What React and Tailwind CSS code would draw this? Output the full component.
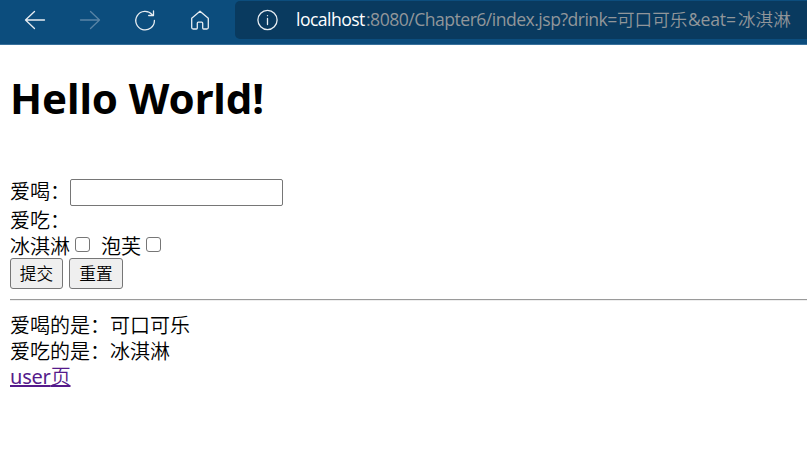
function Stroke({ children, className }) {
  return (
    <svg width="24" height="24" viewBox="0 0 24 24" fill="none" stroke="currentColor" strokeWidth="1.3" strokeLinecap="round" strokeLinejoin="round" className={className}>
      {children}
    </svg>
  );
}

function Toolbar() {
  return (
    <header className="flex h-[45px] items-start overflow-hidden border-b border-[#38709b] bg-[#0c4d7d] text-[#e7edf2]">
      <nav className="flex h-[39px] shrink-0 items-center gap-[31px] pl-[23px]">
        <Stroke>
          <path d="M21.5 12H2.5M11.5 3.5L2.5 12L11.5 20.5" />
        </Stroke>
        <Stroke className="text-[#5984a6]">
          <path d="M2.5 12H21.5M12.5 3.5L21.5 12L12.5 20.5" />
        </Stroke>
        <Stroke>
          <path d="M19.2 6.6A9.3 9.3 0 1 0 21.4 12.5M20.5 3V7.5H15.7" />
        </Stroke>
        <Stroke>
          <path d="M3.7 10.2L12 3.2L20.3 10.2V19.5Q20.3 21 18.8 21H15.6Q14.7 21 14.7 20V15.2Q14.7 14.2 13.7 14.2H10.3Q9.3 14.2 9.3 15.2V20Q9.3 21 8.4 21H5.2Q3.7 21 3.7 19.5Z" />
        </Stroke>
      </nav>
      <div className="ml-[23px] mt-px flex h-[38px] flex-1 items-center rounded-l-[5px] bg-[#093a5f] pl-5">
        <Stroke className="shrink-0">
          <circle cx="12.5" cy="12" r="9.6" />
          <path d="M12.5 10.5V16.5M12.5 7.6V7.7" />
        </Stroke>
        <div className="-mt-px ml-[17px] flex whitespace-nowrap font-['Open_Sans','Noto_Sans_CJK_SC',sans-serif] text-[17.6px] leading-[37px] text-[#91969a]">
          <span className="w-[70px] tracking-[-0.54px] text-white">localhost</span>
          <span className="w-[251px] tracking-[-0.52px]">:8080/Chapter6/index.jsp?drink=</span>
          <span className="w-[71px] font-[350]">可口可乐</span>
          <span className="w-[50px] tracking-[-0.2px]">&amp;eat=</span>
          <span className="font-[350]">冰淇淋</span>
        </div>
      </div>
    </header>
  );
}

const checkbox = "mb-0.5 size-[15px] appearance-none rounded-[3px] border border-[#767676] bg-white";
const button = "h-[31px] rounded-[3px] border border-[#767676] bg-[#efefef] text-[16.7px] leading-[29px]";

export default function App() {
  return (
    <div className="h-[471px] w-[807px] overflow-hidden bg-white font-['Noto_Sans','Noto_Sans_CJK_SC',sans-serif] text-[20px] leading-[26px] text-black">
      <Toolbar />
      <main className="pl-[10px]">
        <h1 className="pt-[26px] text-[42px] font-bold leading-[54px] tracking-[-0.1px]">Hello World!</h1>
        <form className="pt-[54px] font-['Noto_Sans_CJK_SC',sans-serif] font-[350]">
          <div className="flex h-[28px] items-start">
            <label htmlFor="drink" className="w-[60px] whitespace-nowrap leading-[24px]">爱喝：</label>
            <input id="drink" type="text" className="h-[27px] w-[213px] rounded-[2px] border border-[#767676] bg-white px-1" />
          </div>
          <div>爱吃：</div>
          <div className="flex h-[25px] items-center leading-[25px]">
            <span>冰淇淋</span>
            <input type="checkbox" aria-label="冰淇淋" className={checkbox + " ml-[5px]"} />
            <span className="ml-[11px]">泡芙</span>
            <input type="checkbox" aria-label="泡芙" className={checkbox + " ml-[5px]"} />
          </div>
          <div className="flex gap-[6px]">
            <button type="button" className={button + " w-[53px]"}>提交</button>
            <button type="button" className={button + " w-[54px]"}>重置</button>
          </div>
        </form>
        <hr className="mt-[10px] h-[2px] border-t border-b border-t-[#9a9a9a] border-b-[#eeeeee]" />
        <section className="pt-[11px] font-['Noto_Sans_CJK_SC',sans-serif] font-[350]">
          <p>爱喝的是：可口可乐</p>
          <p>爱吃的是：冰淇淋</p>
          <a href="#user" className="block w-fit font-['Noto_Sans','Noto_Sans_CJK_SC',sans-serif] leading-[25px] tracking-[-0.2px] text-[#551a8b] underline decoration-2 underline-offset-1 [text-decoration-skip-ink:none]"><span className="font-normal">user</span>页</a>
        </section>
      </main>
    </div>
  );
}
